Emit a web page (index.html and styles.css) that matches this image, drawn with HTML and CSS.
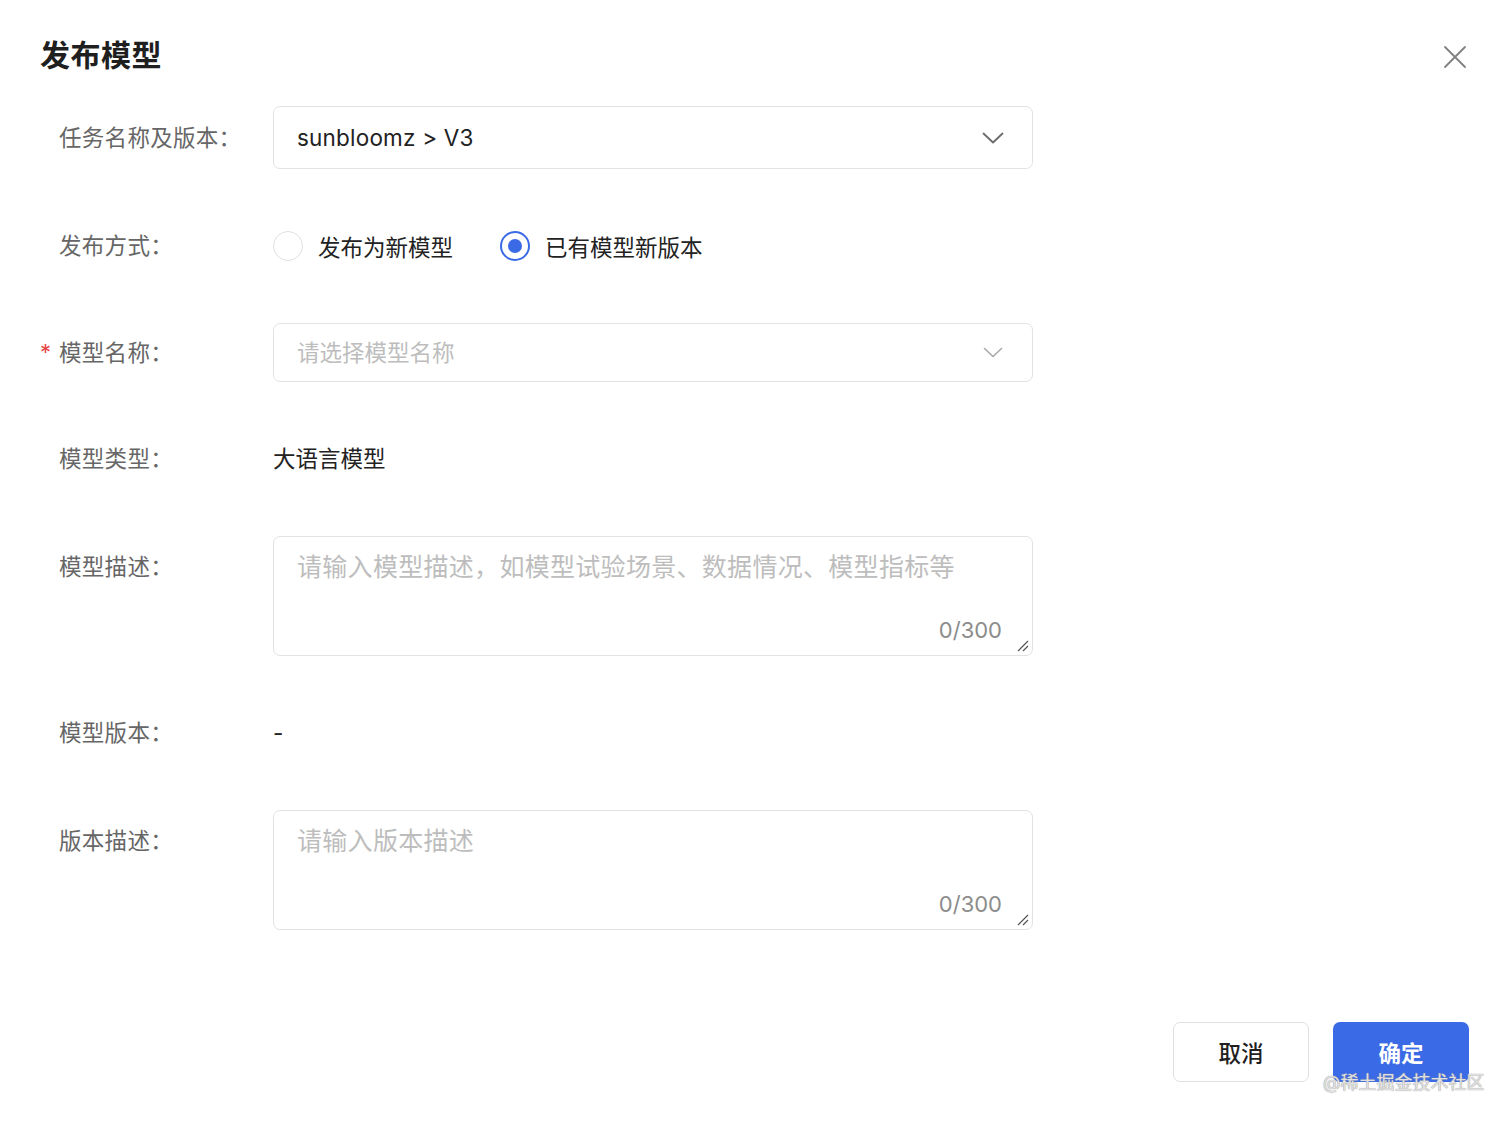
FILE: index.html
```html
<!DOCTYPE html>
<html lang="zh">
<head>
<meta charset="utf-8">
<title>发布模型</title>
<link rel="stylesheet" href="styles.css">
</head>
<body>
<div class="dialog">
  <div class="header">
    <div class="title">发布模型</div>
    <div class="close">
      <svg width="24" height="24" viewBox="0 0 24 24"><path d="M2 2 L22 22 M22 2 L2 22" stroke="#808080" stroke-width="1.8" fill="none" stroke-linecap="round"/></svg>
    </div>
  </div>

  <div class="form">
    <div class="item">
      <div class="label h63">任务名称及版本：</div>
      <div class="select h63">
        <span class="val">sunbloomz &gt; V3</span>
        <svg class="chev" width="22" height="12" viewBox="0 0 22 12"><path d="M1.5 1.5 L11 10.5 L20.5 1.5" stroke="#6b6b6b" stroke-width="1.8" fill="none" stroke-linecap="round" stroke-linejoin="round"/></svg>
      </div>
    </div>

    <div class="item">
      <div class="label h40">发布方式：</div>
      <div class="radios">
        <label class="radio"><span class="circle"></span><span>发布为新模型</span></label>
        <label class="radio on"><span class="circle"><span class="dot"></span></span><span>已有模型新版本</span></label>
      </div>
    </div>

    <div class="item">
      <div class="label h59"><span class="star">*</span>模型名称：</div>
      <div class="select h59">
        <span class="ph">请选择模型名称</span>
        <svg class="chev" width="22" height="12" viewBox="0 0 22 12"><path d="M2.5 1.5 L11 9.5 L19.5 1.5" stroke="#a8a8a8" stroke-width="1.6" fill="none" stroke-linecap="round" stroke-linejoin="round"/></svg>
      </div>
    </div>

    <div class="item">
      <div class="label h40">模型类型：</div>
      <div class="text h40">大语言模型</div>
    </div>

    <div class="item">
      <div class="label h62">模型描述：</div>
      <div class="textarea">
        <span class="ph big">请输入模型描述，如模型试验场景、数据情况、模型指标等</span>
        <span class="count">0/300</span>
        <svg class="grip" width="14" height="14" viewBox="0 0 14 14"><path d="M13 3 L3 13 M13 8 L8 13" stroke="#555" stroke-width="1.2" fill="none"/></svg>
      </div>
    </div>

    <div class="item">
      <div class="label h40">模型版本：</div>
      <div class="text h40">-</div>
    </div>

    <div class="item last">
      <div class="label h62">版本描述：</div>
      <div class="textarea">
        <span class="ph big">请输入版本描述</span>
        <span class="count">0/300</span>
        <svg class="grip" width="14" height="14" viewBox="0 0 14 14"><path d="M13 3 L3 13 M13 8 L8 13" stroke="#555" stroke-width="1.2" fill="none"/></svg>
      </div>
    </div>
  </div>

  <div class="footer">
    <button class="btn cancel">取消</button>
    <button class="btn primary">确定</button>
  </div>
  <div class="watermark">@稀土掘金技术社区</div>
</div>
</body>
</html>
```

FILE: styles.css
```css
* { box-sizing: border-box; }
html, body { margin: 0; padding: 0; background: #fff; }
body {
  font-family: Inter, "Noto Sans CJK SC", sans-serif;
  color: #222;
  width: 1512px;
  height: 1122px;
  overflow: hidden;
}
.dialog {
  position: relative;
  width: 1512px;
  height: 1122px;
}
.header {
  display: flex;
  justify-content: space-between;
  align-items: center;
  padding: 35px 45px 0 40px;
  height: 75px;
}
.title {
  font-size: 30px;
  font-weight: 700;
  line-height: 40px;
  color: #1f1f1f;
  letter-spacing: 0.5px;
}
.close {
  width: 24px;
  height: 24px;
  margin-top: 4px;
}
.close svg { display: block; }
.form {
  padding: 31px 0 0 40px;
}
.item {
  display: flex;
  align-items: flex-start;
  margin-bottom: 57px;
}
.item.last { margin-bottom: 0; }
.label {
  width: 233px;
  padding-left: 19px;
  font-size: 22.5px;
  color: #666;
  white-space: nowrap;
  position: relative;
  letter-spacing: 0.3px;
}
.star {
  position: absolute;
  left: 0;
  color: #e54545;
  font-size: 22px;
}
.h63 { height: 63px; line-height: 63px; }
.h59 { height: 59px; line-height: 59px; }
.h40 { height: 40px; line-height: 40px; }
.h62 { height: 62px; line-height: 62px; }
.select {
  width: 760px;
  border: 1.5px solid #e2e2e2;
  border-radius: 7px;
  display: flex;
  align-items: center;
  justify-content: space-between;
  padding: 0 28px 0 23px;
  font-size: 22.5px;
}
.select .val { color: #222; letter-spacing: 0.2px; }
.ph { color: #bdbdbd; font-size: 22.5px; }
.ph.big { font-size: 25px; letter-spacing: 0.3px; }
.chev { display: block; }
.radios {
  display: flex;
  align-items: center;
  height: 40px;
  gap: 47px;
}
.radio {
  display: flex;
  align-items: center;
  font-size: 22.5px;
  color: #222;
  gap: 15px;
}
.circle {
  width: 30px;
  height: 30px;
  border-radius: 50%;
  border: 1.5px solid #e0e0e0;
  display: flex;
  align-items: center;
  justify-content: center;
}
.radio.on .circle { border: 2px solid #3a6ae6; }
.dot {
  width: 14px;
  height: 14px;
  border-radius: 50%;
  background: #3a6ae6;
}
.text {
  font-size: 22.5px;
  color: #222;
}
.textarea {
  position: relative;
  width: 760px;
  height: 120px;
  border: 1.5px solid #e2e2e2;
  border-radius: 7px;
  padding: 14px 23px;
  line-height: 32px;
}
.count {
  position: absolute;
  right: 30px;
  bottom: 10px;
  font-size: 22px;
  color: #8c8c8c;
  line-height: 30px;
}
.grip {
  position: absolute;
  right: 3px;
  bottom: 3px;
}
.footer {
  display: flex;
  justify-content: flex-end;
  gap: 24px;
  padding: 92px 43px 0 0;
}
.btn {
  width: 136px;
  height: 60px;
  border-radius: 7px;
  font-family: Inter, "Noto Sans CJK SC", sans-serif;
  font-size: 22.5px;
  font-weight: 500;
  cursor: pointer;
}
.cancel {
  background: #fff;
  border: 1.5px solid #e0e0e0;
  color: #1f1f1f;
}
.primary {
  background: #3a6ae6;
  border: none;
  color: #fff;
  font-weight: 700;
}
.watermark {
  position: absolute;
  left: 1323px;
  top: 1070px;
  font-size: 18px;
  line-height: 26px;
  color: rgba(235, 235, 235, 0.9);
  text-shadow: 0 0 1px #9a9a9a, 0 0 1px #9a9a9a;
  white-space: nowrap;
}
```
